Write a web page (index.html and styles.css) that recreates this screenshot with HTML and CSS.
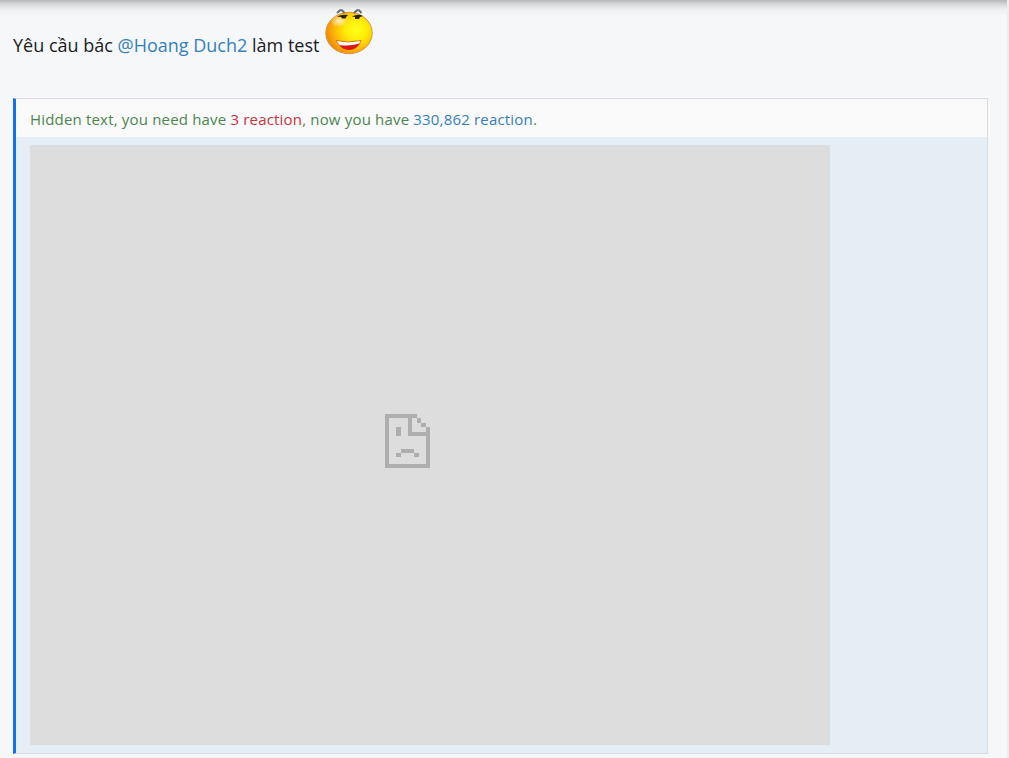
FILE: index.html
```html
<!DOCTYPE html>
<html lang="vi">
<head>
  <meta charset="UTF-8">
  <title>Hidden content</title>
  <link rel="stylesheet" href="styles.css">
</head>
<body>

  <div class="post">
    <div class="message">
      <p>Yêu cầu bác <a href="#">@Hoang Duch2</a> làm test</p>
      <svg class="smiley" width="50" height="48" viewBox="0 0 50 48">
        <defs>
          <radialGradient id="face" cx="0.66" cy="0.42" r="0.68">
            <stop offset="0" stop-color="#ffff1c"/>
            <stop offset="0.35" stop-color="#ffec08"/>
            <stop offset="0.7" stop-color="#ffb808"/>
            <stop offset="1" stop-color="#f08408"/>
          </radialGradient>
          <radialGradient id="shine">
            <stop offset="0" stop-color="#fff" stop-opacity="0.75"/>
            <stop offset="1" stop-color="#fff" stop-opacity="0"/>
          </radialGradient>
        </defs>
        <ellipse cx="25" cy="25" rx="23.2" ry="20.7" fill="url(#face)" stroke="#d9953a" stroke-width="1"/>
        <ellipse cx="15" cy="13" rx="9" ry="6" fill="url(#shine)"/>
        <path d="M13 5 L16 2.2 L18 2.2 L20.5 5 M30 5 L33 2.2 L35 2.2 L37.5 5" fill="none" stroke="#6b6b6b" stroke-width="2"/>
        <path d="M13 8.5 Q18 6 24 7 L22.5 8.5 L21.5 10.5 L18 10.5 L17 9 Z M28 8.5 Q34 5.5 39 8 L36 9 L35 11 L31 11 L31 9 Z" fill="#292600"/>
        <path d="M12 32.5 Q24 35.5 37 32.5 Q34 41.5 25 41.5 Q16 41 12 32.5 Z" fill="#fff" stroke="#c96a13" stroke-width="0.8"/>
        <path d="M15.5 37 Q25 38.5 35.5 35.5 Q32 42 25 42 Q18 41.5 15.5 37 Z" fill="#df1712"/>
      </svg>
    </div>

    <div class="hide-block">
      <div class="hide-title">Hidden text, you need have <span class="required">3 reaction</span>, now you have <span class="current">330,862 reaction</span>.</div>
      <div class="hide-content">
        <div class="frame">
          <svg class="sad-page" width="45" height="54" viewBox="0 0 45 54" fill="#aeaeae" shape-rendering="crispEdges">
            <path d="M0 0H32V4H27V18H45V54H0Z M4 4V50H41V22H23V4Z" fill-rule="evenodd"/>
            <path d="M32 4h4v5h-4z M36 9h5v4h-5z M41 13h4v5h-4z"/>
            <path d="M11 13h5v9h-5z M16 35h13v4h-13z M11 39h5v4h-5z M29 39h5v4h-5z"/>
          </svg>
        </div>
      </div>
    </div>
  </div>

</body>
</html>
```
FILE: styles.css
```css
body {
  margin: 0;
  font-family: "Segoe UI", "Open Sans", "Noto Sans", sans-serif;
  color: #1c1c1c;
  background-color: #f5f7f9;
}

a {
  color: #347fb8;
  text-decoration: none;
}

.post {
  box-sizing: border-box;
  height: 758px;
  padding: 8px 19px 4px 13px;
  border-right: 2px solid #ebedee;
  background: linear-gradient(#b7b8ba, #d5d6d8 4px, #eceef0 9px, #f5f7f9 15px);
}

.message {
  display: flex;
  height: 90px;
}

.message p {
  margin: 24px 0 0;
  width: 311px;
  font-size: 18px;
  line-height: 27px;
  white-space: nowrap;
}

.hide-block {
  box-sizing: border-box;
  width: 975px;
  height: 656px;
  border: 1px solid #d8dce0;
  border-left: 3px solid #1471eb;
}

.hide-title {
  height: 38px;
  padding-left: 14px;
  background-color: #fafafa;
  color: #4a8650;
  font-size: 15px;
  line-height: 41px;
  letter-spacing: 0.18px;
  white-space: nowrap;
}

.required {
  color: #c8323a;
}

.current {
  color: #347fb8;
}

.hide-content {
  box-sizing: border-box;
  height: 616px;
  padding: 8px 14px;
  background-color: #e5edf5;
}

.frame {
  box-sizing: border-box;
  width: 800px;
  height: 600px;
  padding: 269px 0 0 355px;
  background-color: #dddddd;
}

.sad-page {
  display: block;
}
```
